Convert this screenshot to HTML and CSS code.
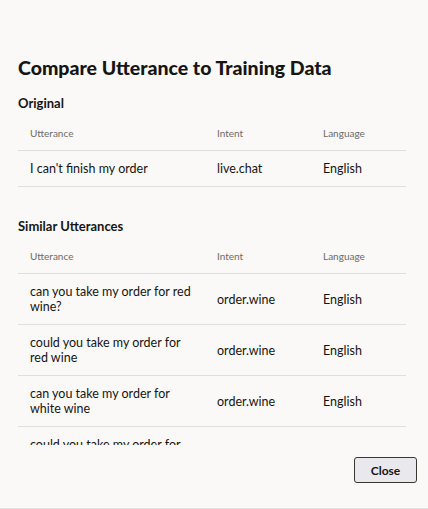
FILE: index.html
```html
<!DOCTYPE html>
<html lang="en">
<head>
    <meta charset="UTF-8">
    <meta name="viewport" content="width=device-width, initial-scale=1.0">
    <title>Compare Utterance to Training Data</title>
    <link rel="stylesheet" href="styles.css">
</head>
<body>
    <div class="dialog">
        <h1 class="dialog-title">Compare Utterance to Training Data</h1>

        <div class="dialog-body">
            <!-- Original utterance -->
            <h2 class="section-title">Original</h2>
            <table class="data-table">
                <thead>
                    <tr>
                        <th class="col-utterance">Utterance</th>
                        <th class="col-intent">Intent</th>
                        <th class="col-language">Language</th>
                    </tr>
                </thead>
                <tbody>
                    <tr>
                        <td>I can't finish my order</td>
                        <td>live.chat</td>
                        <td>English</td>
                    </tr>
                </tbody>
            </table>

            <!-- Similar utterances from training data -->
            <h2 class="section-title similar">Similar Utterances</h2>
            <table class="data-table">
                <thead>
                    <tr>
                        <th class="col-utterance">Utterance</th>
                        <th class="col-intent">Intent</th>
                        <th class="col-language">Language</th>
                    </tr>
                </thead>
                <tbody>
                    <tr>
                        <td>can you take my order for red wine?</td>
                        <td>order.wine</td>
                        <td>English</td>
                    </tr>
                    <tr>
                        <td>could you take my order for red wine</td>
                        <td>order.wine</td>
                        <td>English</td>
                    </tr>
                    <tr>
                        <td>can you take my order for white wine</td>
                        <td>order.wine</td>
                        <td>English</td>
                    </tr>
                    <tr>
                        <td>could you take my order for white wine?</td>
                        <td>order.wine</td>
                        <td>English</td>
                    </tr>
                </tbody>
            </table>
        </div>

        <div class="dialog-footer">
            <button class="btn-close">Close</button>
        </div>
    </div>
</body>
</html>
```

FILE: styles.css
```css
html, body {
    margin: 0;
    padding: 0;
}
body {
    font-family: Lato, "Noto Sans", sans-serif;
    background-color: #faf9f8;
    color: #161513;
}
.dialog {
    display: flex;
    flex-direction: column;
    height: 509px;
    box-sizing: border-box;
    border-bottom: 1px solid #e4e3e1;
}
.dialog-title {
    margin: 0;
    padding: 56px 18px 0;
    font-size: 19.5px;
    line-height: 24px;
    font-weight: 900;
}
.dialog-body {
    flex: 1;
    overflow: hidden;
    padding: 14px 22px 0 18px;
}
.section-title {
    margin: 0;
    font-size: 13px;
    line-height: 18px;
    font-weight: 700;
}
.section-title.similar {
    margin-top: 30px;
}
.data-table {
    width: 100%;
    border-collapse: collapse;
    table-layout: fixed;
}
.data-table th,
.data-table td {
    text-align: left;
    padding: 10px 10px 10px 12px;
    border-bottom: 1px solid #e0dfdd;
    vertical-align: middle;
}
.data-table th {
    padding-top: 13px;
    padding-bottom: 9px;
    font-size: 10px;
    line-height: 16px;
    font-weight: 400;
    color: #6f6b66;
}
.data-table td {
    font-size: 12.5px;
    line-height: 15px;
}
.col-utterance {
    width: 165px;
}
.col-intent {
    width: 84px;
}
.dialog-footer {
    display: flex;
    justify-content: flex-end;
    padding: 12px 11px 25px;
}
.btn-close {
    font-family: inherit;
    font-size: 12px;
    font-weight: 700;
    color: #161513;
    background-color: #e9e8ed;
    border: 1px solid #3a3733;
    border-radius: 3px;
    width: 63px;
    height: 26px;
    padding: 0;
    cursor: pointer;
}
.btn-close:hover {
    background-color: #dcdbe1;
}
```
